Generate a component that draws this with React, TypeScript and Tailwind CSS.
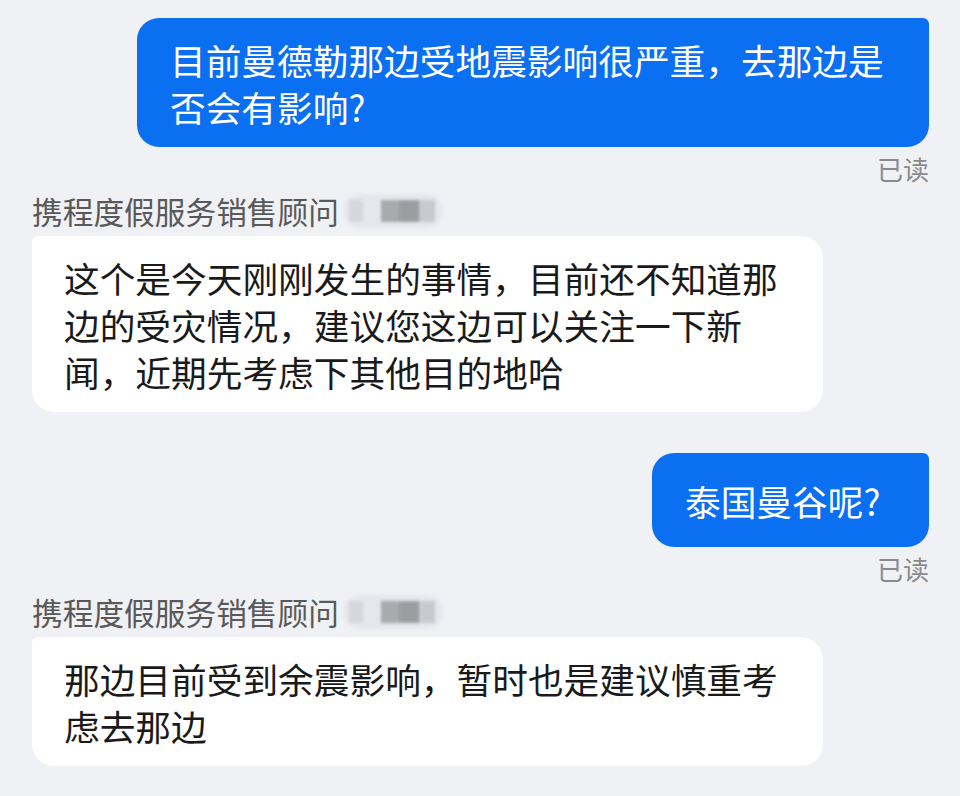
import React from 'react'

const font = { fontFamily: '"Noto Sans CJK SC", "Noto Sans", sans-serif' }

function Sent({ text, className = '' }: { text: string; className?: string }) {
  return (
    <div className="flex flex-col items-end pr-[31px]">
      <div
        className={`bg-[#0b6ff2] text-white text-[35.7px] leading-[47px] rounded-[22px] rounded-tr-[6px] ${className}`}
      >
        {text}
      </div>
      <div className="mt-[5px] text-[26px] leading-[34px] text-[#8a8a8a]">已读</div>
    </div>
  )
}

// blurred-out name suffix
function Blurred() {
  return (
    <span className="relative ml-[4px] inline-flex h-[34px] w-[100px] items-center overflow-hidden rounded-full bg-[#e6e7ec] blur-[1.5px]">
      <span className="ml-[6px] h-[22px] w-[14px] bg-[#d6d7dc]" />
      <span className="ml-[18px] h-[22px] w-[18px] bg-[#a9aaae]" />
      <span className="h-[22px] w-[20px] bg-[#9c9da1]" />
      <span className="h-[22px] w-[16px] bg-[#c9cacf]" />
    </span>
  )
}

function Received({ text }: { text: string }) {
  return (
    <div className="flex flex-col items-start pl-[32px]">
      <div className="flex h-[36px] items-center text-[30.7px] leading-[36px] text-[#595959]">
        携程度假服务销售顾问
        <Blurred />
      </div>
      <div className="mt-[7px] w-[791px] bg-white text-[#1a1a1a] text-[35.7px] leading-[47px] rounded-[22px] rounded-tl-[6px] pl-[32px] pr-[30px] py-[17.5px]">
        {text}
      </div>
    </div>
  )
}

export default function App() {
  return (
    <div className="w-[960px] h-[796px] overflow-hidden bg-[#f0f1f5] pt-[18px]" style={font}>
      <Sent
        text="目前曼德勒那边受地震影响很严重，去那边是否会有影响?"
        className="w-[792px] pl-[33px] pr-[30px] py-[17.5px]"
      />
      <div className="mt-[7px]">
        <Received text="这个是今天刚刚发生的事情，目前还不知道那边的受灾情况，建议您这边可以关注一下新闻，近期先考虑下其他目的地哈" />
      </div>
      <div className="mt-[41px]">
        <Sent text="泰国曼谷呢?" className="w-[277px] pl-[33px] py-[23.5px]" />
      </div>
      <div className="mt-[8px]">
        <Received text="那边目前受到余震影响，暂时也是建议慎重考虑去那边" />
      </div>
    </div>
  )
}
